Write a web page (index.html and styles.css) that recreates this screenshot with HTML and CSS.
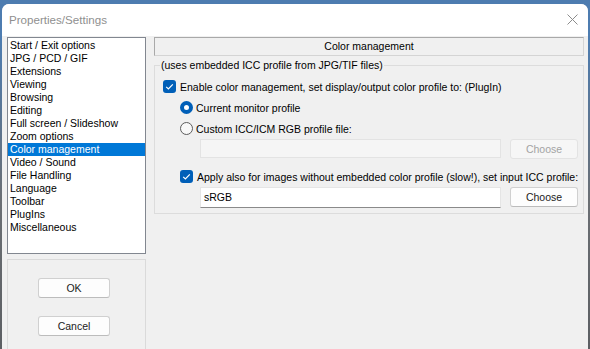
FILE: index.html
```html
<!DOCTYPE html>
<html lang="en">
<head>
    <meta charset="UTF-8">
    <meta name="viewport" content="width=device-width, initial-scale=1.0">
    <title>Properties/Settings</title>
    <link rel="stylesheet" href="styles.css">
</head>
<body>
<div class="window">
    <div class="titlebar">
        <span class="title">Properties/Settings</span>
        <svg class="close" width="11" height="11" viewBox="0 0 11 11">
            <path d="M0.5 0.5 L10.5 10.5 M10.5 0.5 L0.5 10.5" stroke="#8c8c8c" stroke-width="1" fill="none"/>
        </svg>
    </div>
    <div class="content">
        <div class="side">
            <ul class="pages">
                <li>Start / Exit options</li>
                <li>JPG / PCD / GIF</li>
                <li>Extensions</li>
                <li>Viewing</li>
                <li>Browsing</li>
                <li>Editing</li>
                <li>Full screen / Slideshow</li>
                <li>Zoom options</li>
                <li class="selected">Color management</li>
                <li>Video / Sound</li>
                <li>File Handling</li>
                <li>Language</li>
                <li>Toolbar</li>
                <li>PlugIns</li>
                <li>Miscellaneous</li>
            </ul>
            <div class="actions">
                <button class="btn wide">OK</button>
                <button class="btn wide">Cancel</button>
            </div>
        </div>
        <div class="panel">
            <div class="panel-head">Color management</div>
            <fieldset class="group">
                <legend>(uses embedded ICC profile from JPG/TIF files)</legend>
                <div class="row">
                    <span class="check"><svg width="13" height="13" viewBox="0 0 13 13"><path d="M3.2 6.8 L5.4 9 L9.8 4.4" stroke="#fff" stroke-width="1.2" fill="none"/></svg></span>
                    Enable color management, set display/output color profile to: (PlugIn)
                </div>
                <div class="row sub">
                    <span class="radio on"></span>
                    Current monitor profile
                </div>
                <div class="row sub">
                    <span class="radio"></span>
                    Custom ICC/ICM RGB profile file:
                </div>
                <div class="file-row">
                    <div class="field off"></div>
                    <button class="btn choose" disabled>Choose</button>
                </div>
                <div class="row sub second">
                    <span class="check"><svg width="13" height="13" viewBox="0 0 13 13"><path d="M3.2 6.8 L5.4 9 L9.8 4.4" stroke="#fff" stroke-width="1.2" fill="none"/></svg></span>
                    Apply also for images without embedded color profile (slow!), set input ICC profile:
                </div>
                <div class="file-row">
                    <div class="field">sRGB</div>
                    <button class="btn choose">Choose</button>
                </div>
            </fieldset>
        </div>
    </div>
</div>
</body>
</html>
```

FILE: styles.css
```css
body{
    margin:0;
    height:349px;
    overflow:hidden;
    background:linear-gradient(#4d7cb0, #4d7cb0 40px, #6b6f74 200px, #5c5f63);
    font-family:"Liberation Sans", Arial, sans-serif;
    font-size:10.5px;
    color:#000;
}
.window{
    margin:4px 0 0 2px;
    width:586px;
    height:345px;
    background:#f0f0f0;
    border-radius:7px 7px 0 0;
    overflow:hidden;
    display:flex;
    flex-direction:column;
}
.titlebar{
    height:32px;
    flex-shrink:0;
    background:#fff;
    display:flex;
    align-items:center;
    justify-content:space-between;
    padding:0 10px 2px 7px;
    box-sizing:border-box;
}
.title{
    font-size:11.6px;
    color:#8f8f8f;
}
.close{
    display:block;
}
.content{
    flex:1;
    display:flex;
    gap:8px;
    padding:1px 4px 0 5px;
}
.side{
    width:139px;
    flex-shrink:0;
    display:flex;
    flex-direction:column;
    gap:5px;
}
.pages{
    height:217px;
    box-sizing:border-box;
    margin:0;
    padding:1px 0 0 0;
    list-style-type:none;
    background:#fff;
    border:1px solid #828790;
}
.pages li{
    line-height:13px;
    padding-left:2px;
    white-space:nowrap;
}
.pages li.selected{
    background:#0078d7;
    color:#fff;
}
.actions{
    flex:1;
    border:1px solid #dadada;
    border-bottom:none;
    display:flex;
    flex-direction:column;
    align-items:flex-start;
    gap:18px;
    padding:18px 0 0 30px;
}
.btn{
    height:20px;
    box-sizing:border-box;
    padding:0;
    font-family:"Liberation Sans", Arial, sans-serif;
    font-size:10.5px;
    color:#1b1b1b;
    background:#fdfdfd;
    border:1px solid #d0d0d0;
    border-bottom-color:#bcbcbc;
    border-radius:3px;
}
.btn.wide{
    width:72px;
}
.btn.choose{
    width:68px;
    flex-shrink:0;
}
.btn:disabled{
    color:#a3a3a3;
    background:#f6f6f6;
    border-color:#e3e3e3;
}
.panel{
    flex:1;
    min-width:0;
    display:flex;
    flex-direction:column;
}
.panel-head{
    height:19px;
    box-sizing:border-box;
    line-height:17px;
    text-align:center;
    border:1px solid #a9a9a9;
    border-right-color:#d4d4d4;
    border-bottom-color:#d4d4d4;
}
.group{
    margin:3px 0 0 0;
    padding:4px 5px 6px 8px;
    border:1px solid #dcdcdc;
    min-width:0;
}
.group legend{
    padding:0 1px;
    margin-left:-3px;
    line-height:13px;
}
.row{
    height:21px;
    display:flex;
    align-items:center;
    gap:4px;
    white-space:nowrap;
}
.row.sub{
    padding-left:17px;
}
.row.second{
    margin-top:7px;
}
.check{
    width:13px;
    height:13px;
    background:#005fb8;
    border-radius:3px;
    flex-shrink:0;
}
.check svg{
    display:block;
}
.radio{
    width:13px;
    height:13px;
    box-sizing:border-box;
    border-radius:50%;
    border:1px solid #5c5c5c;
    background:#f8f8f8;
    flex-shrink:0;
    margin-right:-1px;
}
.radio.on{
    border:4px solid #005fb8;
    background:#fff;
}
.file-row{
    height:20px;
    display:flex;
    gap:9px;
    padding-left:37px;
}
.field{
    flex:1;
    height:21px;
    box-sizing:border-box;
    background:#fff;
    border:1px solid #e5e5e5;
    border-bottom-color:#8a8a8a;
    padding-left:3px;
    line-height:19px;
}
.field.off{
    height:19px;
    background:#f5f5f5;
    border-color:#e3e3e3;
}
```
